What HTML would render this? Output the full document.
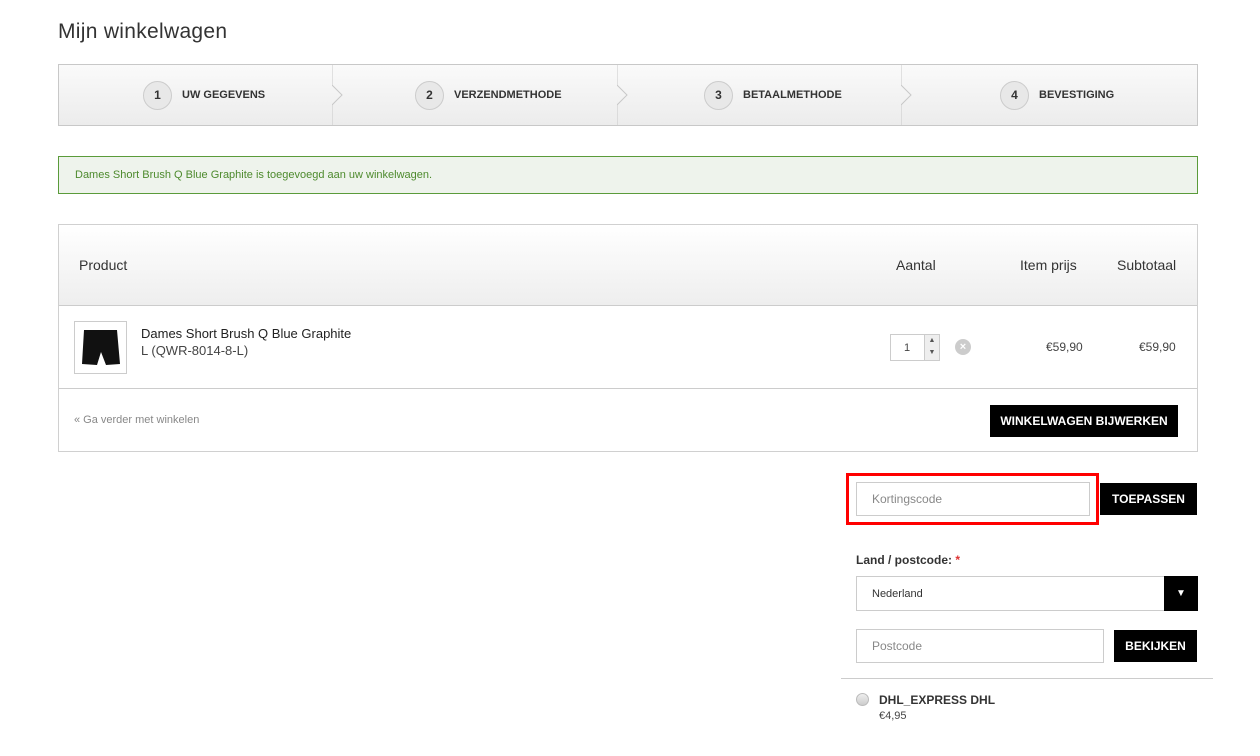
<!DOCTYPE html>
<html><head><meta charset="utf-8"><style>
*{box-sizing:border-box;margin:0;padding:0}
body{width:1260px;height:756px;background:#fff;font-family:"Liberation Sans",sans-serif;color:#333;position:relative;overflow:hidden}
.a{position:absolute}
h1{position:absolute;left:58px;top:20px;font-size:21px;font-weight:normal;color:#333;letter-spacing:0.3px}
.steps{left:58px;top:64px;width:1140px;height:62px;border:1px solid #c8c8c8;background:linear-gradient(#fafafa,#ececec)}
.step{position:absolute;top:0;height:60px;display:flex;align-items:center;font-size:11px;font-weight:bold;color:#333}
.num{width:29px;height:29px;border-radius:50%;border:1px solid #ccc;background:#e8e8e8;display:flex;align-items:center;justify-content:center;font-size:12px;margin-right:10px}
.sep{position:absolute;top:0}
.msg{left:58px;top:156px;width:1140px;height:38px;border:1px solid #5a9b3a;background:#eef3ec;color:#4d8a2d;font-size:11px;padding:12px 16px}
.cart{left:58px;top:224px;width:1140px;height:228px;border:1px solid #d0d0d0}
.head{position:absolute;left:0;top:0;width:1138px;height:81px;background:linear-gradient(#fff,#eee);border-bottom:1px solid #ccc;font-size:14px}
.head span{position:absolute;top:32px}
.btn{position:absolute;background:#000;color:#fff;font-size:12px;font-weight:bold;display:flex;align-items:center;justify-content:center}
.inp{position:absolute;border:1px solid #ccc;font-size:12px;color:#888;padding-left:15px;display:flex;align-items:center}
</style></head><body>
<h1>Mijn winkelwagen</h1>
<div class="a steps">
 <div class="step" style="left:84px"><div class="num">1</div>UW GEGEVENS</div>
 <div class="step" style="left:356px"><div class="num">2</div>VERZENDMETHODE</div>
 <div class="step" style="left:645px"><div class="num">3</div>BETAALMETHODE</div>
 <div class="step" style="left:941px"><div class="num">4</div>BEVESTIGING</div>
 <svg class="sep" style="left:273px" width="14" height="60"><polyline points="0,0 0,20 10,30 0,40 0,60" fill="none" stroke="#c8c8c8"/></svg>
 <svg class="sep" style="left:558px" width="14" height="60"><polyline points="0,0 0,20 10,30 0,40 0,60" fill="none" stroke="#c8c8c8"/></svg>
 <svg class="sep" style="left:842px" width="14" height="60"><polyline points="0,0 0,20 10,30 0,40 0,60" fill="none" stroke="#c8c8c8"/></svg>
</div>
<div class="a msg">Dames Short Brush Q Blue Graphite is toegevoegd aan uw winkelwagen.</div>
<div class="a cart">
 <div class="head"><span style="left:20px">Product</span><span style="left:837px">Aantal</span><span style="left:961px">Item prijs</span><span style="left:1058px">Subtotaal</span></div>
 <div class="a" style="left:15px;top:96px;width:53px;height:53px;border:1px solid #ccc;background:#fff">
  <svg width="51" height="51"><path d="M9 8 L42 8 L45 42 L31 43 L26 30 L22 43 L7 42 Z" fill="#111"/></svg></div>
 <div class="a" style="left:82px;top:101px;font-size:13px;color:#222">Dames Short Brush Q Blue Graphite</div>
 <div class="a" style="left:82px;top:118px;font-size:13px;color:#444">L (QWR-8014-8-L)</div>
 <div class="a" style="left:831px;top:109px;width:50px;height:27px;border:1px solid #ccc;font-size:11px;padding:7px 0 0 13px;color:#444">1<div class="a" style="left:33px;top:0;width:15px;height:25px;border-left:1px solid #ccc;background:#eee;font-size:7px;line-height:12px;text-align:center;color:#555">▲<br>▼</div></div>
 <div class="a" style="left:896px;top:114px;width:16px;height:16px;border-radius:50%;background:#ccc;color:#fff;font-size:11px;font-weight:bold;text-align:center;line-height:16px">×</div>
 <div class="a" style="left:987px;top:115px;font-size:12px;color:#444">€59,90</div>
 <div class="a" style="left:1080px;top:115px;font-size:12px;color:#444">€59,90</div>
 <div class="a" style="left:0;top:163px;width:1138px;border-top:1px solid #ccc"></div>
 <div class="a" style="left:15px;top:189px;font-size:11px;color:#888">« Ga verder met winkelen</div>
 <div class="btn" style="left:931px;top:180px;width:188px;height:32px">WINKELWAGEN BIJWERKEN</div>
</div>
<div class="a" style="left:846px;top:473px;width:253px;height:52px;border:3px solid #f00"></div>
<div class="inp" style="left:856px;top:482px;width:234px;height:34px">Kortingscode</div>
<div class="btn" style="left:1100px;top:483px;width:97px;height:32px">TOEPASSEN</div>
<div class="a" style="left:856px;top:553px;font-size:12px;font-weight:bold;color:#333">Land / postcode: <span style="color:#d33">*</span></div>
<div class="inp" style="left:856px;top:576px;width:310px;height:35px;color:#333;font-size:11px">Nederland</div>
<div class="btn" style="left:1164px;top:576px;width:34px;height:35px;font-size:10px">▼</div>
<div class="inp" style="left:856px;top:629px;width:248px;height:34px">Postcode</div>
<div class="btn" style="left:1114px;top:630px;width:83px;height:32px">BEKIJKEN</div>
<div class="a" style="left:841px;top:678px;width:372px;border-top:1px solid #ccc"></div>
<div class="a" style="left:856px;top:693px;width:13px;height:13px;border-radius:50%;border:1px solid #bbb;background:linear-gradient(#eee,#ccc)"></div>
<div class="a" style="left:879px;top:693px;font-size:12px;font-weight:bold;color:#333">DHL_EXPRESS DHL</div>
<div class="a" style="left:879px;top:710px;font-size:11px;color:#444">€4,95</div>
</body></html>
